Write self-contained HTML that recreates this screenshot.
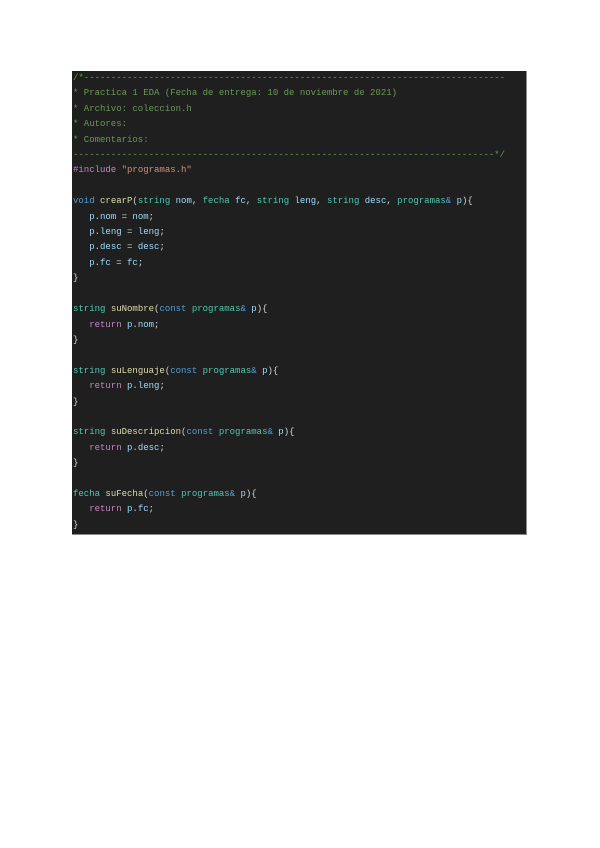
<!DOCTYPE html>
<html><head><meta charset="utf-8"><style>
html,body{margin:0;padding:0;background:#fff;width:600px;height:848px;overflow:hidden}
.box{position:absolute;left:72px;top:71px;width:454px;height:463px;background:#1f1f1f;border-right:1px solid #8a8a8a;border-bottom:1px solid #8a8a8a}
pre{margin:0;position:absolute;left:1px;top:0px;font-family:"Liberation Mono",monospace;font-size:9px;line-height:15.41px;color:#d4d4d4;white-space:pre}
.c{color:#6a9955}.k{color:#569cd6}.t{color:#4ec9b0}.f{color:#dcdcaa}.v{color:#9cdcfe}.r{color:#c586c0}.s{color:#ce9178}
</style></head><body><div class="box"><pre><span class="c">/*------------------------------------------------------------------------------
* Practica 1 EDA (Fecha de entrega: 10 de noviembre de 2021)
* Archivo: coleccion.h
* Autores:
* Comentarios:
------------------------------------------------------------------------------*/</span>
<span class="r">#include</span> <span class="s">"programas.h"</span>

<span class="k">void</span> <span class="f">crearP</span>(<span class="t">string</span> <span class="v">nom</span>, <span class="t">fecha</span> <span class="v">fc</span>, <span class="t">string</span> <span class="v">leng</span>, <span class="t">string</span> <span class="v">desc</span>, <span class="t">programas</span><span class="k">&amp;</span> <span class="v">p</span>){
   <span class="v">p</span>.<span class="v">nom</span> = <span class="v">nom</span>;
   <span class="v">p</span>.<span class="v">leng</span> = <span class="v">leng</span>;
   <span class="v">p</span>.<span class="v">desc</span> = <span class="v">desc</span>;
   <span class="v">p</span>.<span class="v">fc</span> = <span class="v">fc</span>;
}

<span class="t">string</span> <span class="f">suNombre</span>(<span class="k">const</span> <span class="t">programas</span><span class="k">&amp;</span> <span class="v">p</span>){
   <span class="r">return</span> <span class="v">p</span>.<span class="v">nom</span>;
}

<span class="t">string</span> <span class="f">suLenguaje</span>(<span class="k">const</span> <span class="t">programas</span><span class="k">&amp;</span> <span class="v">p</span>){
   <span class="r">return</span> <span class="v">p</span>.<span class="v">leng</span>;
}

<span class="t">string</span> <span class="f">suDescripcion</span>(<span class="k">const</span> <span class="t">programas</span><span class="k">&amp;</span> <span class="v">p</span>){
   <span class="r">return</span> <span class="v">p</span>.<span class="v">desc</span>;
}

<span class="t">fecha</span> <span class="f">suFecha</span>(<span class="k">const</span> <span class="t">programas</span><span class="k">&amp;</span> <span class="v">p</span>){
   <span class="r">return</span> <span class="v">p</span>.<span class="v">fc</span>;
}</pre></div></body></html>
